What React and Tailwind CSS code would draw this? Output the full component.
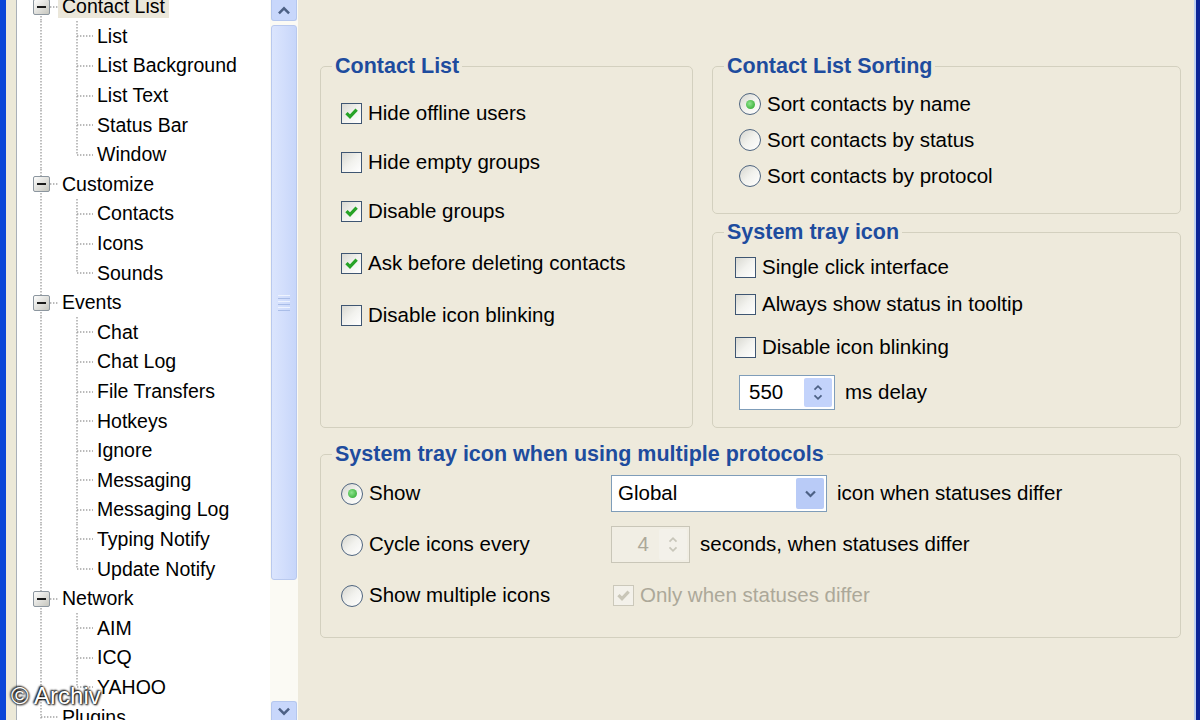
import React from "react";

const tree = [
  { label: "Contact List", selected: true, children: ["List", "List Background", "List Text", "Status Bar", "Window"] },
  { label: "Customize", children: ["Contacts", "Icons", "Sounds"] },
  {
    label: "Events",
    children: ["Chat", "Chat Log", "File Transfers", "Hotkeys", "Ignore", "Messaging", "Messaging Log", "Typing Notify", "Update Notify"],
  },
  { label: "Network", children: ["AIM", "ICQ", "YAHOO"] },
  { label: "Plugins", children: [] },
];

const DOT = { stroke: "#a3a3a3", strokeWidth: 1.4, strokeDasharray: "1.4 1.6" };

function ParentRow({ item }) {
  const hasKids = item.children.length > 0;
  return (
    <div className="flex h-[29.6px] shrink-0 items-center">
      <svg width="41" height="30" className="shrink-0">
        <line x1="24" y1="0" x2="24" y2="30" {...DOT} />
        {hasKids ? (
          <>
            <line x1="33" y1="15" x2="41" y2="15" {...DOT} />
            <defs>
              <linearGradient id="boxg" x1="0" y1="0" x2="1" y2="1">
                <stop offset="0" stopColor="#ffffff" />
                <stop offset="1" stopColor="#c4c4bc" />
              </linearGradient>
            </defs>
            <rect x="16.5" y="7.5" width="16" height="15" rx="1.5" fill="url(#boxg)" stroke="#8c969f" />
            <line x1="20" y1="15" x2="29" y2="15" stroke="#1a1a1a" strokeWidth="2" />
          </>
        ) : (
          <line x1="24" y1="15" x2="41" y2="15" {...DOT} />
        )}
      </svg>
      <span className={`px-[4px] leading-[23px] ${item.selected ? "bg-[#ebe7da]" : ""}`}>{item.label}</span>
    </div>
  );
}

function ChildRow({ label, last }) {
  return (
    <div className="flex h-[29.6px] shrink-0 items-center">
      <svg width="76" height="30" className="shrink-0">
        <line x1="24" y1="0" x2="24" y2="30" {...DOT} />
        <line x1="60" y1="0" x2="60" y2={last ? 15 : 30} {...DOT} />
        <line x1="60" y1="15" x2="76" y2="15" {...DOT} />
      </svg>
      <span className="px-[4px] leading-[23px]">{label}</span>
    </div>
  );
}

function Chevron({ up, className = "" }) {
  return (
    <svg viewBox="0 0 12 8" className={className}>
      <path d={up ? "M1.5 6.5 L6 2 L10.5 6.5" : "M1.5 1.5 L6 6 L10.5 1.5"} fill="none" stroke="#4d6185" strokeWidth="2.2" />
    </svg>
  );
}

function Scrollbar() {
  return (
    <div className="flex w-[28px] shrink-0 flex-col bg-[#fbfaf4] px-[1px]">
      <div className="flex h-[21px] items-center justify-center rounded-b-[3px] border border-t-0 border-[#b5c7ee] bg-[#c8d7fb]">
        <Chevron up className="h-[9px] w-[14px]" />
      </div>
      <div className="mt-[4px] flex h-[555px] items-center justify-center rounded-[3px] border border-[#b9c9ee] bg-gradient-to-r from-[#dbe5fd] via-[#d2defc] to-[#c7d6fa]">
        <div className="flex w-[12px] flex-col gap-[2px]">
          <span className="h-px bg-[#eef3fe]" />
          <span className="h-px bg-[#a9bde8]" />
          <span className="h-px bg-[#eef3fe]" />
          <span className="h-px bg-[#a9bde8]" />
          <span className="h-px bg-[#eef3fe]" />
          <span className="h-px bg-[#a9bde8]" />
        </div>
      </div>
      <div className="flex-1" />
      <div className="flex h-[19px] items-center justify-center rounded-t-[3px] border border-b-0 border-[#b5c7ee] bg-[#c8d7fb]">
        <Chevron className="h-[9px] w-[14px]" />
      </div>
    </div>
  );
}

function CheckBox({ checked, disabled }) {
  return (
    <span
      className={`flex h-[21px] w-[21px] shrink-0 items-center justify-center border ${
        disabled ? "border-[#cbc8ba] bg-[#f3f1ea]" : "border-[#3f5672] bg-gradient-to-br from-[#d9d9d2] via-[#f2f2ee] to-white"
      }`}
    >
      {checked ? (
        <svg viewBox="0 0 14 14" className="h-[15px] w-[15px]">
          <path d="M2.3 6.6 L5.6 10 L11.8 3.4" fill="none" stroke={disabled ? "#c9c6b8" : "#27a327"} strokeWidth="3" />
        </svg>
      ) : null}
    </span>
  );
}

function Radio({ checked }) {
  return (
    <span className="flex h-[22px] w-[22px] shrink-0 items-center justify-center rounded-full border border-[#4f6580] bg-gradient-to-br from-[#d6d6cf] via-[#f2f2ee] to-white">
      {checked ? <span className="h-[9px] w-[9px] rounded-full bg-[radial-gradient(circle_at_40%_40%,#8fe48f,#23a223)]" /> : null}
    </span>
  );
}

function Option({ control, label, muted }) {
  return (
    <div className="flex h-[24px] items-center gap-[6px]">
      {control}
      <span className={muted ? "text-[#aca899]" : ""}>{label}</span>
    </div>
  );
}

function Group({ title, className = "", children }) {
  return (
    <fieldset className={`rounded-[5px] border border-[#d3d0bf] ${className}`}>
      <legend className="ml-[11px] px-[3px] text-[21.5px] font-bold leading-[22px] text-[#1e4c9e]">{title}</legend>
      {children}
    </fieldset>
  );
}

function SpinButtons({ disabled }) {
  return (
    <div
      className={`my-[2px] mr-[2px] flex w-[28px] flex-col items-center justify-center gap-[3px] rounded-[2px] ${
        disabled ? "bg-[#f3f1ea]" : "bg-[#c3d3fb]"
      }`}
    >
      <svg viewBox="0 0 12 8" className="h-[7px] w-[12px]">
        <path d="M2 6.5 L6 2.5 L10 6.5" fill="none" stroke={disabled ? "#c8c6ba" : "#4d6185"} strokeWidth="2" />
      </svg>
      <svg viewBox="0 0 12 8" className="h-[7px] w-[12px]">
        <path d="M2 1.5 L6 5.5 L10 1.5" fill="none" stroke={disabled ? "#c8c6ba" : "#4d6185"} strokeWidth="2" />
      </svg>
    </div>
  );
}

export default function App() {
  return (
    <div className="relative flex h-[720px] w-[1200px] overflow-hidden bg-[#ece9d8] font-['Liberation_Sans',Arial,sans-serif] text-[19.5px] text-black">
      <div className="w-[6px] shrink-0 bg-[#0b46d8]" />
      <div className="w-[10px] shrink-0 bg-[#ece9d8]" />

      <div className="flex w-[282px] shrink-0 border-l border-[#a9b0b8] bg-white">
        <div className="flex w-[253px] shrink-0 flex-col">
          <div className="-mt-[8px] flex flex-col">
            {tree.map((item) => (
              <React.Fragment key={item.label}>
                <ParentRow item={item} />
                {item.children.map((child, i) => (
                  <ChildRow key={child} label={child} last={i === item.children.length - 1} />
                ))}
              </React.Fragment>
            ))}
          </div>
        </div>
        <Scrollbar />
      </div>

      <div className="w-[896px] shrink-0 bg-[#eeeadc] pl-[22px] pr-[13px] pt-[55px] text-[20.5px]">
        <div className="flex gap-[19px]">
          <Group title="Contact List" className="w-[373px]">
            <div className="mt-[24px] flex flex-col pl-[20px]">
              <Option control={<CheckBox checked />} label="Hide offline users" />
              <div className="mt-[25px]">
                <Option control={<CheckBox />} label="Hide empty groups" />
              </div>
              <div className="mt-[25px]">
                <Option control={<CheckBox checked />} label="Disable groups" />
              </div>
              <div className="mt-[28px]">
                <Option control={<CheckBox checked />} label="Ask before deleting contacts" />
              </div>
              <div className="mt-[28px]">
                <Option control={<CheckBox />} label="Disable icon blinking" />
              </div>
            </div>
          </Group>

          <div className="flex w-[469px] flex-col gap-[7px]">
            <Group title="Contact List Sorting" className="h-[159px]">
              <div className="mt-[15px] flex flex-col gap-[12px] pl-[26px]">
                <Option control={<Radio checked />} label="Sort contacts by name" />
                <Option control={<Radio />} label="Sort contacts by status" />
                <Option control={<Radio />} label="Sort contacts by protocol" />
              </div>
            </Group>

            <Group title="System tray icon" className="h-[207px]">
              <div className="mt-[12px] flex flex-col pl-[22px]">
                <Option control={<CheckBox />} label="Single click interface" />
                <div className="mt-[13px]">
                  <Option control={<CheckBox />} label="Always show status in tooltip" />
                </div>
                <div className="mt-[19px]">
                  <Option control={<CheckBox />} label="Disable icon blinking" />
                </div>
                <div className="ml-[4px] mt-[16px] flex items-center gap-[10px]">
                  <div className="flex h-[35px] w-[96px] border border-[#7f9db9] bg-white">
                    <span className="flex flex-1 items-center pl-[9px]">550</span>
                    <SpinButtons />
                  </div>
                  <span>ms delay</span>
                </div>
              </div>
            </Group>
          </div>
        </div>

        <Group title="System tray icon when using multiple protocols" className="mt-[15px] h-[195px]">
          <div className="mt-[10px] grid grid-cols-[270px_1fr] grid-rows-[37px_37px_37px] gap-y-[14px] pl-[20px]">
            <div className="flex items-center">
              <Option control={<Radio checked />} label="Show" />
            </div>
            <div className="flex items-center gap-[10px]">
              <div className="flex h-[37px] w-[216px] border border-[#7f9db9] bg-white">
                <span className="flex flex-1 items-center pl-[6px]">Global</span>
                <div className="my-[2px] mr-[2px] flex w-[28px] items-center justify-center rounded-[2px] bg-[#b9cbf7]">
                  <Chevron className="h-[8px] w-[13px]" />
                </div>
              </div>
              <span>icon when statuses differ</span>
            </div>

            <div className="flex items-center">
              <Option control={<Radio />} label="Cycle icons every" />
            </div>
            <div className="flex items-center gap-[10px]">
              <div className="flex h-[37px] w-[79px] border border-[#c9c6b8] bg-[#f1eee4]">
                <span className="flex flex-1 items-center justify-end pr-[10px] text-[#aca899]">4</span>
                <SpinButtons disabled />
              </div>
              <span>seconds, when statuses differ</span>
            </div>

            <div className="flex items-center">
              <Option control={<Radio />} label="Show multiple icons" />
            </div>
            <div className="flex items-center pl-[2px]">
              <Option control={<CheckBox checked disabled />} label="Only when statuses differ" muted />
            </div>
          </div>
        </Group>
      </div>

      <div className="w-[2px] shrink-0 bg-[#bcd0f2]" />
      <div className="w-[4px] shrink-0 bg-[#0b2597]" />

      <div className="absolute bottom-[6px] left-[11px] text-[24px] text-white [text-shadow:0_0_2px_#000,1px_1px_2px_#000,-1px_-1px_2px_#000]">
        © Archiv
      </div>
    </div>
  );
}
